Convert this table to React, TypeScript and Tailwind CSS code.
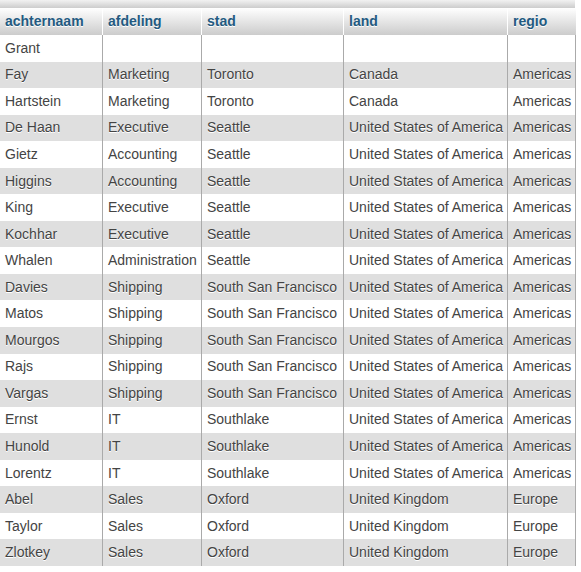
import React from 'react';

interface Medewerker {
  achternaam: string;
  afdeling: string;
  stad: string;
  land: string;
  regio: string;
}

const kolommen = ['achternaam', 'afdeling', 'stad', 'land', 'regio'];

const USA = 'United States of America';

const rijen: Medewerker[] = [
  { achternaam: 'Grant', afdeling: '', stad: '', land: '', regio: '' },
  { achternaam: 'Fay', afdeling: 'Marketing', stad: 'Toronto', land: 'Canada', regio: 'Americas' },
  { achternaam: 'Hartstein', afdeling: 'Marketing', stad: 'Toronto', land: 'Canada', regio: 'Americas' },
  { achternaam: 'De Haan', afdeling: 'Executive', stad: 'Seattle', land: USA, regio: 'Americas' },
  { achternaam: 'Gietz', afdeling: 'Accounting', stad: 'Seattle', land: USA, regio: 'Americas' },
  { achternaam: 'Higgins', afdeling: 'Accounting', stad: 'Seattle', land: USA, regio: 'Americas' },
  { achternaam: 'King', afdeling: 'Executive', stad: 'Seattle', land: USA, regio: 'Americas' },
  { achternaam: 'Kochhar', afdeling: 'Executive', stad: 'Seattle', land: USA, regio: 'Americas' },
  { achternaam: 'Whalen', afdeling: 'Administration', stad: 'Seattle', land: USA, regio: 'Americas' },
  { achternaam: 'Davies', afdeling: 'Shipping', stad: 'South San Francisco', land: USA, regio: 'Americas' },
  { achternaam: 'Matos', afdeling: 'Shipping', stad: 'South San Francisco', land: USA, regio: 'Americas' },
  { achternaam: 'Mourgos', afdeling: 'Shipping', stad: 'South San Francisco', land: USA, regio: 'Americas' },
  { achternaam: 'Rajs', afdeling: 'Shipping', stad: 'South San Francisco', land: USA, regio: 'Americas' },
  { achternaam: 'Vargas', afdeling: 'Shipping', stad: 'South San Francisco', land: USA, regio: 'Americas' },
  { achternaam: 'Ernst', afdeling: 'IT', stad: 'Southlake', land: USA, regio: 'Americas' },
  { achternaam: 'Hunold', afdeling: 'IT', stad: 'Southlake', land: USA, regio: 'Americas' },
  { achternaam: 'Lorentz', afdeling: 'IT', stad: 'Southlake', land: USA, regio: 'Americas' },
  { achternaam: 'Abel', afdeling: 'Sales', stad: 'Oxford', land: 'United Kingdom', regio: 'Europe' },
  { achternaam: 'Taylor', afdeling: 'Sales', stad: 'Oxford', land: 'United Kingdom', regio: 'Europe' },
  { achternaam: 'Zlotkey', afdeling: 'Sales', stad: 'Oxford', land: 'United Kingdom', regio: 'Europe' },
];

const App: React.FC = () => {
  return (
    <div className="w-[576px] bg-white font-['Liberation_Sans',Arial,sans-serif] text-[14px]">
      {/* balk boven de tabel */}
      <div className="h-2 w-[575px] bg-gradient-to-b from-[#f2f2f2] to-[#cdcdcd]" />

      {/* kop */}
      <div className="grid h-[27px] grid-cols-[103px_99px_142px_164px_68px] bg-gradient-to-b from-white to-[#cccccc]">
        {kolommen.map((k, i) => (
          <div
            key={k}
            className={`flex items-center px-[5px] pb-px font-bold text-[#235a81] [text-shadow:0_1px_0_#fff] ${
              i < 4 ? 'border-r border-white' : ''
            }`}
          >
            {k}
          </div>
        ))}
      </div>

      {/* rijen */}
      {rijen.map((r, idx) => (
        <div
          key={r.achternaam}
          className={`grid h-[26.55px] grid-cols-[103px_99px_142px_164px_68px] text-[#444] ${
            idx % 2 === 0 ? 'bg-white' : 'bg-[#dfdfdf]'
          }`}
        >
          {[r.achternaam, r.afdeling, r.stad, r.land, r.regio].map((v, i) => (
            <div
              key={i}
              className="flex items-center overflow-hidden whitespace-nowrap border-r border-[#aaaaaa] px-[5px] [text-shadow:0_1px_0_#fff]"
            >
              {v}
            </div>
          ))}
        </div>
      ))}
    </div>
  );
};

export default App;
